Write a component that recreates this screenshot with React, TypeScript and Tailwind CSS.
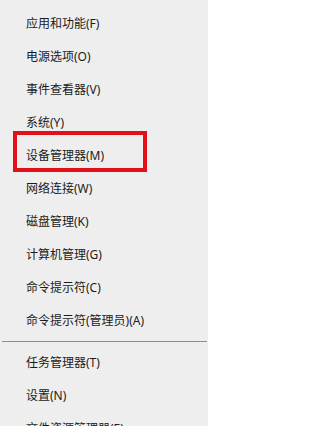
import React from 'react';

const TOP_ITEMS = [
  '应用和功能(F)',
  '电源选项(O)',
  '事件查看器(V)',
  '系统(Y)',
  '设备管理器(M)',
  '网络连接(W)',
  '磁盘管理(K)',
  '计算机管理(G)',
  '命令提示符(C)',
  '命令提示符(管理员)(A)',
];

const BOTTOM_ITEMS = ['任务管理器(T)', '设置(N)', '文件资源管理器(E)'];

export default function App() {
  return (
    <div
      className="relative w-[208px] h-[426px] overflow-hidden bg-[#eeeeee] text-[#1b1b1b] text-[12px]"
      style={{ fontFamily: '"Noto Sans", "Noto Sans CJK SC", sans-serif' }}
    >
      {/* Upper group */}
      <ul className="pt-[7px]">
        {TOP_ITEMS.map((label) => (
          <li key={label} className="h-[33px] flex items-center pl-[26px] leading-none whitespace-nowrap">
            {label}
          </li>
        ))}
      </ul>

      {/* Divider */}
      <div className="mt-[4px] mb-[4px] ml-[2px] mr-[1px] h-px bg-[#8c8c8c]" />

      {/* Lower group */}
      <ul>
        {BOTTOM_ITEMS.map((label) => (
          <li key={label} className="h-[33px] flex items-center pl-[26px] leading-none whitespace-nowrap">
            {label}
          </li>
        ))}
      </ul>

      {/* Red highlight annotation */}
      <div className="absolute left-[13px] top-[131px] w-[134px] h-[41px] border-4 border-[#e3101a] pointer-events-none" />
    </div>
  );
}
